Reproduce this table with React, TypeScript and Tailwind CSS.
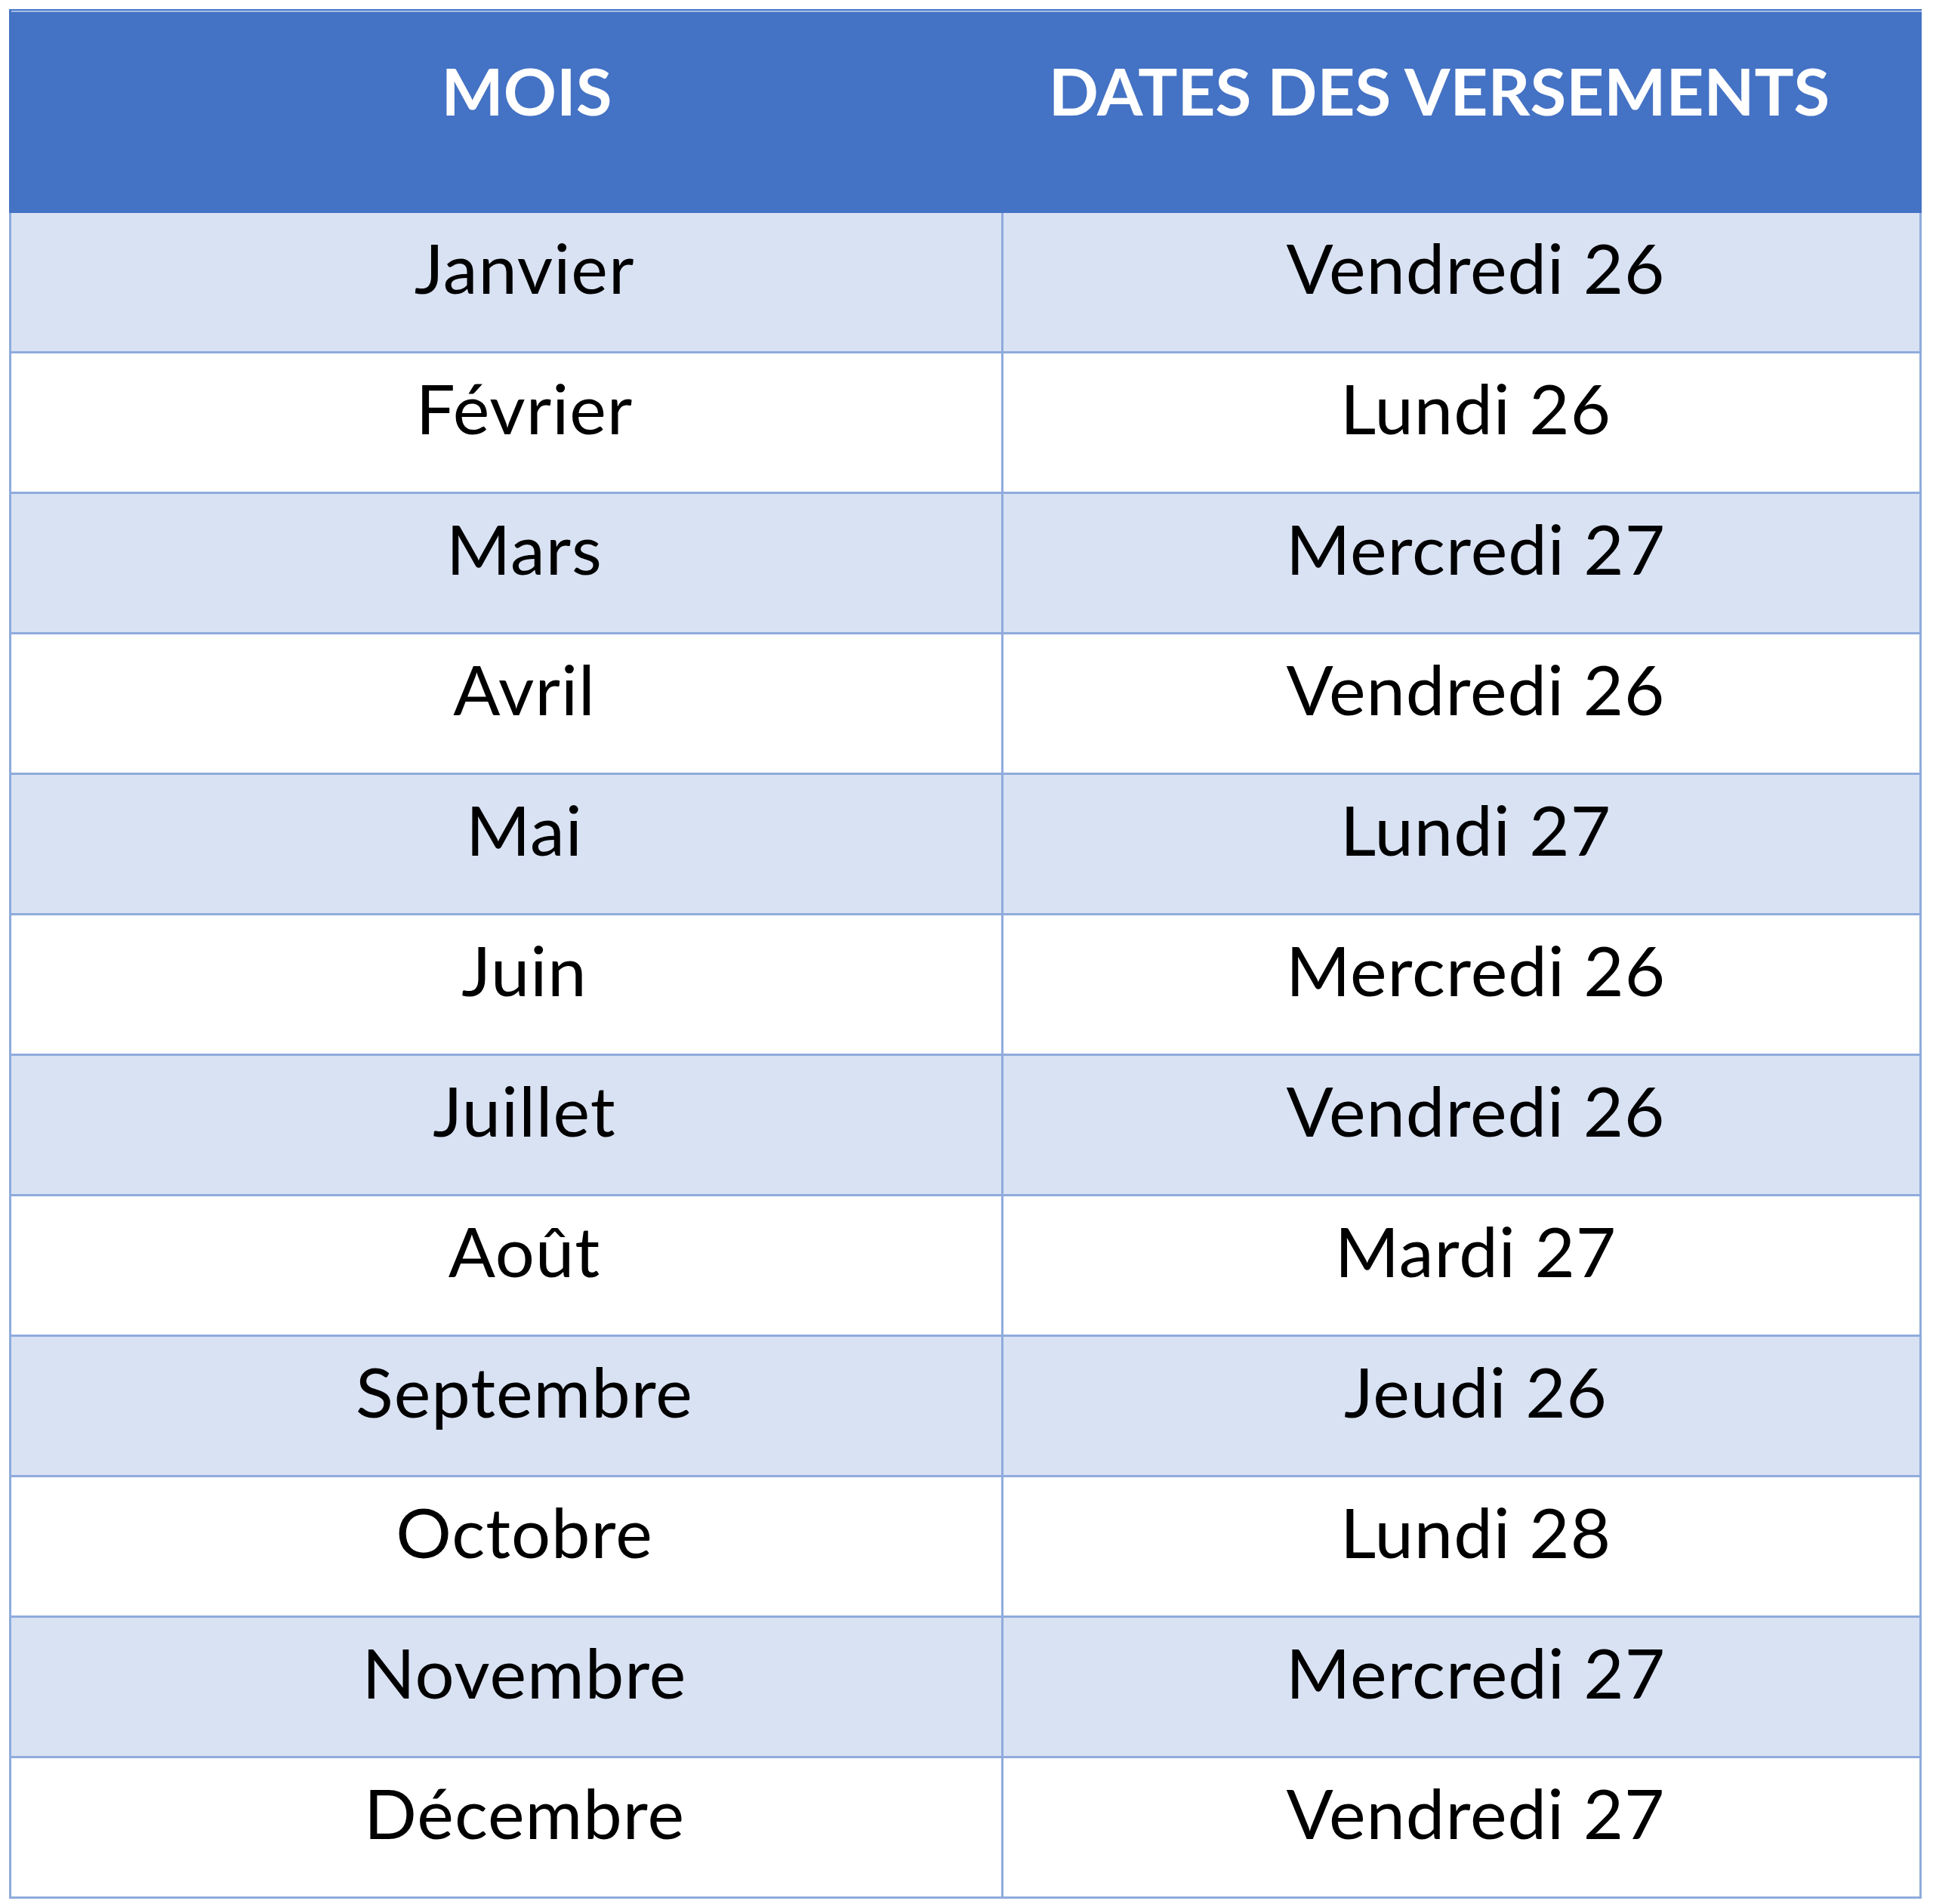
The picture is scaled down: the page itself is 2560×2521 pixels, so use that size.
import React from "react";

const rows: [string, string][] = [
  ["Janvier", "Vendredi 26"],
  ["Février", "Lundi 26"],
  ["Mars", "Mercredi 27"],
  ["Avril", "Vendredi 26"],
  ["Mai", "Lundi 27"],
  ["Juin", "Mercredi 26"],
  ["Juillet", "Vendredi 26"],
  ["Août", "Mardi 27"],
  ["Septembre", "Jeudi 26"],
  ["Octobre", "Lundi 28"],
  ["Novembre", "Mercredi 27"],
  ["Décembre", "Vendredi 27"],
];

export default function App() {
  return (
    <div
      className="w-[2560px] h-[2521px] bg-white pt-[12px] pl-[12px]"
      style={{ fontFamily: "Lato, 'Noto Sans', sans-serif" }}
    >
      <div className="w-[2533px] flex flex-col">
        <div className="h-[270px] bg-[#4472c4] border-t-[2px] border-[#4d7bcb] flex flex-col">
          <div className="h-[2px] ml-[3px] bg-[#a3bbe6]" />
          <div className="flex text-white font-bold text-[87px] leading-none">
            <div className="w-[1317px] pl-[54px] pt-[60px] text-center">MOIS</div>
            <div className="flex-1 pr-[62px] pt-[60px] text-center">DATES DES VERSEMENTS</div>
          </div>
        </div>
        {rows.map(([m, d], i) => (
          <div
            key={m}
            className={`h-[186px] flex border-b-[3px] border-[#8fabdc] text-black text-[92px] tracking-[1px] leading-none ${
              i % 2 === 0 ? "bg-[#d9e2f3]" : "bg-white"
            }`}
          >
            <div className="w-[1317px] border-l-[3px] border-r-[3px] border-[#8fabdc] pl-[48px] pt-[26px] text-center">
              {m}
            </div>
            <div className="flex-1 border-r-[3px] border-[#8fabdc] pl-[38px] pt-[26px] text-center">
              {d}
            </div>
          </div>
        ))}
      </div>
    </div>
  );
}
